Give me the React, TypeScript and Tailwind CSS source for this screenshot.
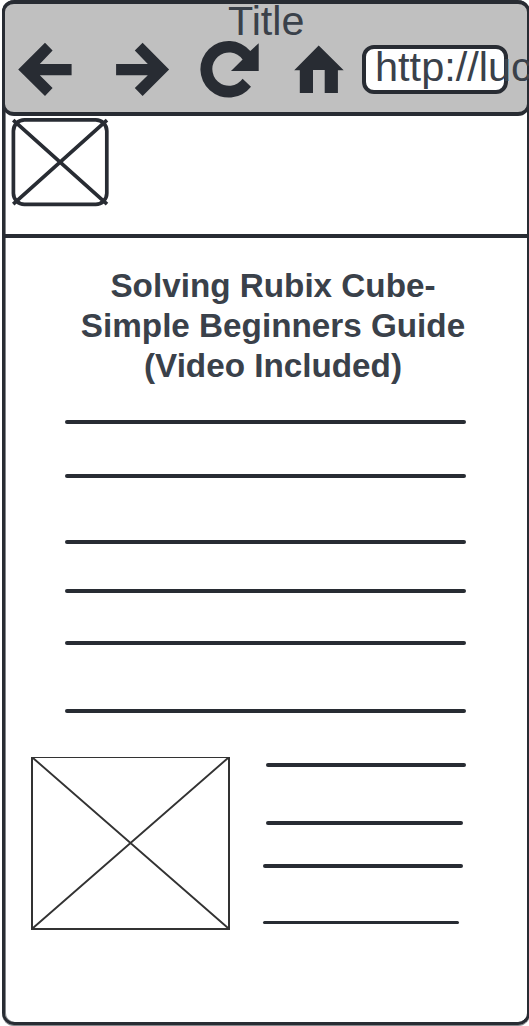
type RuleProps = { className: string };

function Rule({ className }: RuleProps) {
  return <div className={`rounded-full bg-[#282c33] ${className}`} />;
}

function BackIcon() {
  return (
    <svg className="ml-[13px] mt-[42px] h-[55px] w-[54px] shrink-0" viewBox="18 42 54 55" fill="#282c33">
      <path d="M18.2 69.5L45 42.7L52.6 50.5L39.8 63.9H71.6V75.2H39.8L52.6 88L45 95.9Z" />
    </svg>
  );
}

function ForwardIcon() {
  return (
    <svg className="ml-[44px] mt-[42px] h-[55px] w-[54px] shrink-0" viewBox="116 42 54 55" fill="#282c33">
      <path d="M169.1 69.5L142.6 42.7L134.8 50.5L147.8 63.9H116.1V75.2H147.8L134.8 88L142.6 95.9Z" />
    </svg>
  );
}

function ReloadIcon() {
  return (
    <svg className="ml-[30px] mt-[40px] h-[59px] w-[60px] shrink-0" viewBox="200 40 60 59" fill="#282c33">
      <path d="M250.3 51A28.3 28.3 0 1 0 251 86.7L242.6 78.8A16.7 16.7 0 1 1 242.6 59.4L231 71H258.7V43.3Z" />
    </svg>
  );
}

function HomeIcon() {
  return (
    <svg className="ml-[34px] mt-[45px] h-[49px] w-[50px] shrink-0" viewBox="294 45 50 49" fill="#282c33">
      <path d="M318.7 45.5L343.7 70.3H337.9V93H324.7V70.1H313V93H299.8V70.3H294.2Z" />
    </svg>
  );
}

function Logo() {
  return (
    <svg className="ml-[5px] mt-px h-[90px] w-[100px] shrink-0" viewBox="10 117 100 90" fill="none" stroke="#282c33" strokeWidth="3.7">
      <rect x="13.4" y="119.9" width="93.4" height="84.4" rx="11" />
      <path d="M13.2 120.2L107 204.2M107 120.2L13.2 204.2" />
    </svg>
  );
}

function Picture() {
  return (
    <div className="h-[173px] w-[199px] shrink-0 border-2 border-t border-[#333333]">
      <svg className="block h-full w-full overflow-visible" viewBox="0 0 195 170" stroke="#333333" strokeWidth="1.9">
        <path d="M0 0L195 170M195 0L0 170" />
      </svg>
    </div>
  );
}

export default function App() {
  return (
    <div className="h-[1026px] w-[529px] overflow-hidden bg-white pl-[2px] font-['Liberation_Sans',Arial,sans-serif] text-[#3a414a]">
      <div className="relative flex h-[1025px] w-[528px] flex-col rounded-[12px] border-[3px] border-t-0 border-[#282c33] shadow-[inset_1px_0_0_#85888c,0_1px_0_#85888c]">
        <header className="relative -ml-[3px] flex h-[116px] w-[528px] shrink-0 rounded-[12px] border-y-4 border-l-[3px] border-r-[3px] border-[#282c33] bg-[#c0c0c0]">
          <h1 className="absolute -top-[6px] left-[223px] text-[41.3px] leading-[46px]">Title</h1>
          <div className="-mt-1 flex">
            <BackIcon />
            <ForwardIcon />
            <ReloadIcon />
            <HomeIcon />
            <div className="ml-[18px] mt-[45px] h-[49px] w-[146px] shrink-0 rounded-[12px] border-4 border-[#282c33] bg-white pl-[9px]">
              <span className="-mt-[5px] block whitespace-nowrap text-[41.5px] leading-[46px]">http://luc</span>
            </div>
          </div>
        </header>

        <div className="flex h-[122px] shrink-0 border-b-4 border-[#282c33]">
          <Logo />
        </div>

        <main className="flex flex-col">
          <h2 className="mt-[28px] w-[536px] text-center text-[33.25px] font-bold leading-[40px]">
            Solving Rubix Cube-
            <br />
            Simple Beginners Guide
            <br />
            (Video Included)
          </h2>

          <section className="ml-[60.4px] mt-[34px] flex w-[401px] flex-col">
            <Rule className="h-1" />
            <Rule className="mt-[50px] h-1" />
            <Rule className="mt-[62px] h-1" />
            <Rule className="mt-[45px] h-1" />
            <Rule className="mt-[48px] h-1" />
            <Rule className="mt-[64px] h-1" />
          </section>

          <section className="ml-[26px] mt-[44px] flex">
            <Picture />
            <div className="ml-[32.6px] mt-[6px] flex flex-col">
              <Rule className="ml-[3.8px] h-1 w-[200px]" />
              <Rule className="ml-[3.8px] mt-[54px] h-1 w-[196.6px]" />
              <Rule className="mt-[39px] h-1 w-[200px]" />
              <Rule className="mt-[53px] h-[3px] w-[196.4px]" />
            </div>
          </section>
        </main>
      </div>
    </div>
  );
}
